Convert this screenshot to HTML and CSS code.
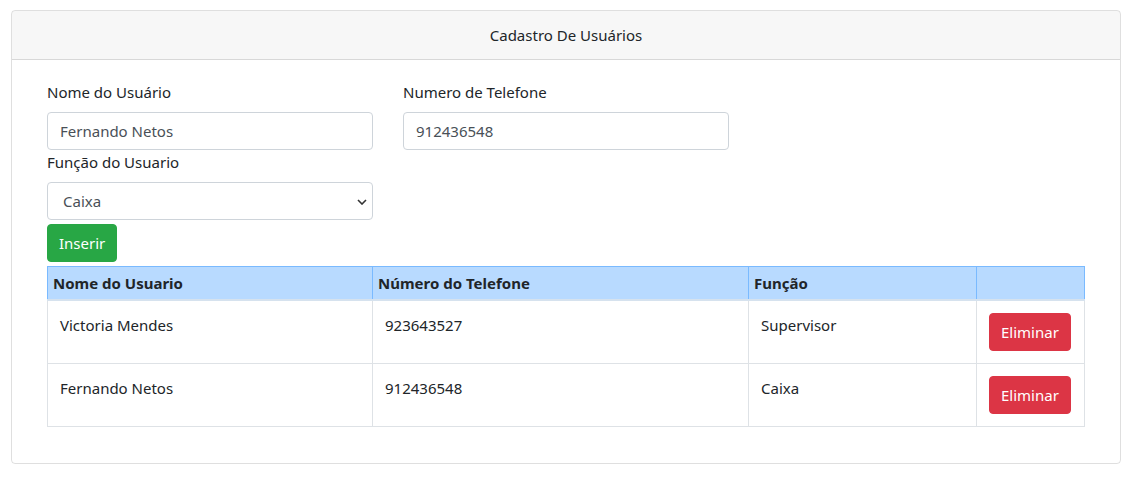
FILE: index.html
```html
<!DOCTYPE html>
<html lang="pt">
<head>
<meta charset="utf-8">
<title>Cadastro De Usuários</title>
<link rel="stylesheet" href="styles.css">
</head>
<body>
<div class="card">
  <div class="card-header">Cadastro De Usuários</div>
  <div class="card-body">
    <div class="row">
      <div class="col">
        <label class="lbl">Nome do Usuário</label>
        <input class="form-control" type="text" value="Fernando Netos">
      </div>
      <div class="col">
        <label class="lbl">Numero de Telefone</label>
        <input class="form-control" type="text" value="912436548">
      </div>
    </div>
    <div class="row">
      <div class="col">
        <label class="lbl">Função do Usuario</label>
        <div class="select-wrap">
          <select class="form-control select">
            <option>Caixa</option>
            <option>Supervisor</option>
          </select>
          <svg class="chev" width="10" height="6" viewBox="0 0 10 6"><path d="M1 1l4 4 4-4" fill="none" stroke="#333" stroke-width="1.6"/></svg>
        </div>
      </div>
    </div>
    <button class="btn btn-success">Inserir</button>
    <table class="table">
      <colgroup>
        <col class="c1"><col class="c2"><col class="c3"><col class="c4">
      </colgroup>
      <thead>
        <tr>
          <th>Nome do Usuario</th>
          <th>Número do Telefone</th>
          <th>Função</th>
          <th></th>
        </tr>
      </thead>
      <tbody>
        <tr>
          <td>Victoria Mendes</td>
          <td>923643527</td>
          <td>Supervisor</td>
          <td><button class="btn btn-danger">Eliminar</button></td>
        </tr>
        <tr>
          <td>Fernando Netos</td>
          <td>912436548</td>
          <td>Caixa</td>
          <td><button class="btn btn-danger">Eliminar</button></td>
        </tr>
      </tbody>
    </table>
  </div>
</div>
</body>
</html>
```
FILE: styles.css
```css
* { box-sizing: border-box; }
body {
  margin: 0;
  font-family: "Noto Sans", "Open Sans", sans-serif;
  font-size: 15px;
  line-height: 24px;
  color: #212529;
  background: #fff;
}
.card {
  margin: 10px 15px 0 11px;
  border: 1px solid rgba(0,0,0,.125);
  border-radius: 4px;
}
.card-header {
  background: rgba(0,0,0,.03);
  border-bottom: 1px solid rgba(0,0,0,.125);
  padding: 12px 20px;
  text-align: center;
  border-radius: 3px 3px 0 0;
}
.card-body {
  padding: 20px 35px 20px 35px;
}
.row {
  display: flex;
  gap: 30px;
}
.col {
  width: 326px;
  display: flex;
  flex-direction: column;
}
.lbl {
  display: block;
  margin-bottom: 8px;
}
.form-control {
  display: block;
  width: 100%;
  height: 38px;
  padding: 6px 12px;
  font: inherit;
  color: #495057;
  background: #fff;
  border: 1px solid #ced4da;
  border-radius: 4px;
  outline: none;
}
.select-wrap { position: relative; }
.select {
  appearance: none;
  -webkit-appearance: none;
  padding-left: 15px;
}
.chev {
  position: absolute;
  right: 6px;
  top: 17px;
  pointer-events: none;
}
.btn {
  display: inline-block;
  font: inherit;
  line-height: 24px;
  padding: 6px 11px;
  border: 1px solid transparent;
  border-radius: 4px;
  color: #fff;
  cursor: pointer;
}
.btn-success {
  background: #28a745;
  border-color: #28a745;
  margin-top: 4px;
  display: block;
}
.btn-danger {
  background: #dc3545;
  border-color: #dc3545;
}
.table {
  width: 1037px;
  table-layout: fixed;
  margin-top: 4px;
  margin-bottom: 16px;
  border-collapse: collapse;
}
.table th {
  background: #b8daff;
  border: 1px solid #7abaff;
  border-bottom: 2px solid #d6e2ee;
  padding: 4px 5px;
  text-align: left;
  font-weight: 700;
  vertical-align: bottom;
}
.table td {
  border: 1px solid #dee2e6;
  padding: 12px;
  vertical-align: top;
}
.c1 { width: 325px; }
.c2 { width: 376px; }
.c3 { width: 228px; }
.c4 { width: 108px; }
```
